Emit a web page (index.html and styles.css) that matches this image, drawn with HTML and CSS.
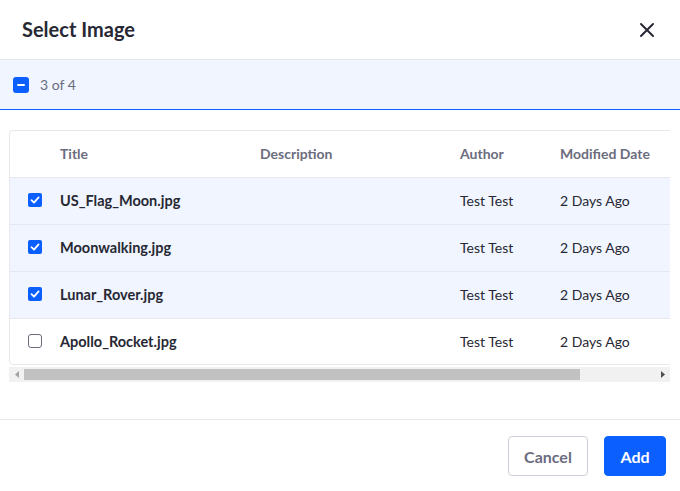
FILE: index.html
```html
<!DOCTYPE html>
<html lang="en">
<head>
<meta charset="utf-8">
<title>Select Image</title>
<link rel="stylesheet" href="styles.css">
</head>
<body>
<div class="modal">
  <header class="modal-header">
    <h1 class="modal-title">Select Image</h1>
    <button class="close" aria-label="Close">
      <svg width="16" height="16" viewBox="0 0 16 16"><path d="M2 2 L14 14 M14 2 L2 14" stroke="#272833" stroke-width="2" stroke-linecap="round"/></svg>
    </button>
  </header>
  <div class="mgmt-bar">
    <span class="cb cb-indeterminate"><span class="dash"></span></span>
    <span class="count">3 of 4</span>
  </div>
  <div class="modal-body">
    <div class="scroller">
      <div class="card">
        <table class="tbl">
          <colgroup>
            <col class="c-check"><col class="c-title"><col class="c-desc"><col class="c-author"><col class="c-date">
          </colgroup>
          <thead>
            <tr><th></th><th>Title</th><th>Description</th><th>Author</th><th>Modified Date</th></tr>
          </thead>
          <tbody>
            <tr class="sel">
              <td><span class="cb cb-checked"><svg width="10" height="10" viewBox="0 0 10 10"><path d="M1.5 5.2 L4 7.6 L8.6 2.4" stroke="#fff" stroke-width="1.8" fill="none" stroke-linecap="round" stroke-linejoin="round"/></svg></span></td>
              <td class="name">US_Flag_Moon.jpg</td><td></td><td>Test Test</td><td>2 Days Ago</td>
            </tr>
            <tr class="sel">
              <td><span class="cb cb-checked"><svg width="10" height="10" viewBox="0 0 10 10"><path d="M1.5 5.2 L4 7.6 L8.6 2.4" stroke="#fff" stroke-width="1.8" fill="none" stroke-linecap="round" stroke-linejoin="round"/></svg></span></td>
              <td class="name">Moonwalking.jpg</td><td></td><td>Test Test</td><td>2 Days Ago</td>
            </tr>
            <tr class="sel">
              <td><span class="cb cb-checked"><svg width="10" height="10" viewBox="0 0 10 10"><path d="M1.5 5.2 L4 7.6 L8.6 2.4" stroke="#fff" stroke-width="1.8" fill="none" stroke-linecap="round" stroke-linejoin="round"/></svg></span></td>
              <td class="name">Lunar_Rover.jpg</td><td></td><td>Test Test</td><td>2 Days Ago</td>
            </tr>
            <tr class="last">
              <td><span class="cb cb-empty"></span></td>
              <td class="name">Apollo_Rocket.jpg</td><td></td><td>Test Test</td><td>2 Days Ago</td>
            </tr>
          </tbody>
        </table>
      </div>
    </div>
    <div class="hscroll" aria-hidden="true">
      <span class="arrow"><svg width="4" height="7" viewBox="0 0 4 7"><path d="M4 0 L0 3.5 L4 7 Z" fill="#a3a3a3"/></svg></span>
      <span class="track"><span class="thumb"></span></span>
      <span class="arrow"><svg width="4" height="7" viewBox="0 0 4 7"><path d="M0 0 L4 3.5 L0 7 Z" fill="#505050"/></svg></span>
    </div>
  </div>
  <footer class="modal-footer">
    <button class="btn btn-secondary">Cancel</button>
    <button class="btn btn-primary">Add</button>
  </footer>
</div>
</body>
</html>
```

FILE: styles.css
```css
* { box-sizing: border-box; }
html, body { margin: 0; padding: 0; background: #fff; }
body {
  font-family: Lato, "Open Sans", sans-serif;
  color: #272833;
  width: 680px;
  height: 491px;
  overflow: hidden;
}
.modal { width: 680px; }

.modal-header {
  height: 60px;
  border-bottom: 1px solid #e7e7ed;
  display: flex;
  align-items: center;
  justify-content: space-between;
  padding: 0 25px 0 22px;
}
.modal-title {
  margin: 0;
  font-size: 20px;
  font-weight: 700;
  color: #272833;
  padding-bottom: 2px;
}
.close {
  border: 0;
  background: none;
  padding: 0;
  width: 16px;
  height: 16px;
  display: flex;
}

.mgmt-bar {
  height: 50px;
  background: #f0f5ff;
  border-bottom: 1px solid #0b5fff;
  display: flex;
  align-items: center;
  padding-left: 13px;
  gap: 11px;
}
.count { font-size: 14px; color: #6b6c7e; }

.cb {
  display: inline-flex;
  align-items: center;
  justify-content: center;
  vertical-align: middle;
}
.cb-indeterminate {
  width: 16px; height: 16px;
  background: #0b5fff;
  border-radius: 3px;
}
.dash { width: 8px; height: 2px; background: #fff; border-radius: 1px; }
.cb-checked {
  width: 14px; height: 14px;
  background: #0b5fff;
  border-radius: 2px;
}
.cb-empty {
  width: 14px; height: 14px;
  border: 1px solid #6b6c7e;
  border-radius: 3px;
  background: #fff;
}

.modal-body { padding: 20px 10px 37px 9px; }
.scroller { overflow: hidden; }
.card {
  width: 750px;
  border: 1px solid #e7e7ed;
  border-radius: 4px;
  overflow: hidden;
}
.tbl {
  width: 748px;
  table-layout: fixed;
  border-collapse: collapse;
  font-size: 14px;
}
.c-check { width: 50px; }
.c-title { width: 200px; }
.c-desc { width: 200px; }
.c-author { width: 100px; }
.c-date { width: 198px; }
.tbl th, .tbl td {
  padding: 0;
  text-align: left;
  white-space: nowrap;
  vertical-align: middle;
}
.tbl th { height: 46px; font-weight: 700; color: #6b6c7e; }
.tbl td { height: 47px; color: #272833; }
.tbl td:first-child { padding-left: 18px; padding-bottom: 4px; }
.tbl tr { border-bottom: 1px solid #e7e7ed; }
.tbl tr.last { border-bottom: 0; }
.tbl tr.last td { height: 46px; }
.tbl tr.sel { background: #f0f5ff; }
.tbl td.name { font-weight: 700; font-size: 14.5px; }

.hscroll {
  display: flex;
  height: 15px;
  margin-top: 2px;
  background: #f1f1f1;
}
.arrow {
  width: 15px;
  flex: none;
  display: flex;
  align-items: center;
  justify-content: center;
}
.track { flex: 1; display: flex; align-items: center; }
.thumb {
  width: 556px;
  height: 11px;
  background: #c1c1c1;
}

.modal-footer {
  border-top: 1px solid #e7e7ed;
  display: flex;
  justify-content: flex-end;
  gap: 16px;
  padding: 16px 14px 15px 0;
}
.btn {
  height: 40px;
  border-radius: 4px;
  font-family: inherit;
  font-size: 16px;
  font-weight: 700;
  padding: 0 15px;
}
.btn-secondary {
  width: 80px;
  background: #fff;
  border: 1px solid #cdced9;
  color: #6b6c7e;
}
.btn-primary {
  width: 62px;
  background: #0b5fff;
  border: 1px solid #0b5fff;
  color: #fff;
}
```
